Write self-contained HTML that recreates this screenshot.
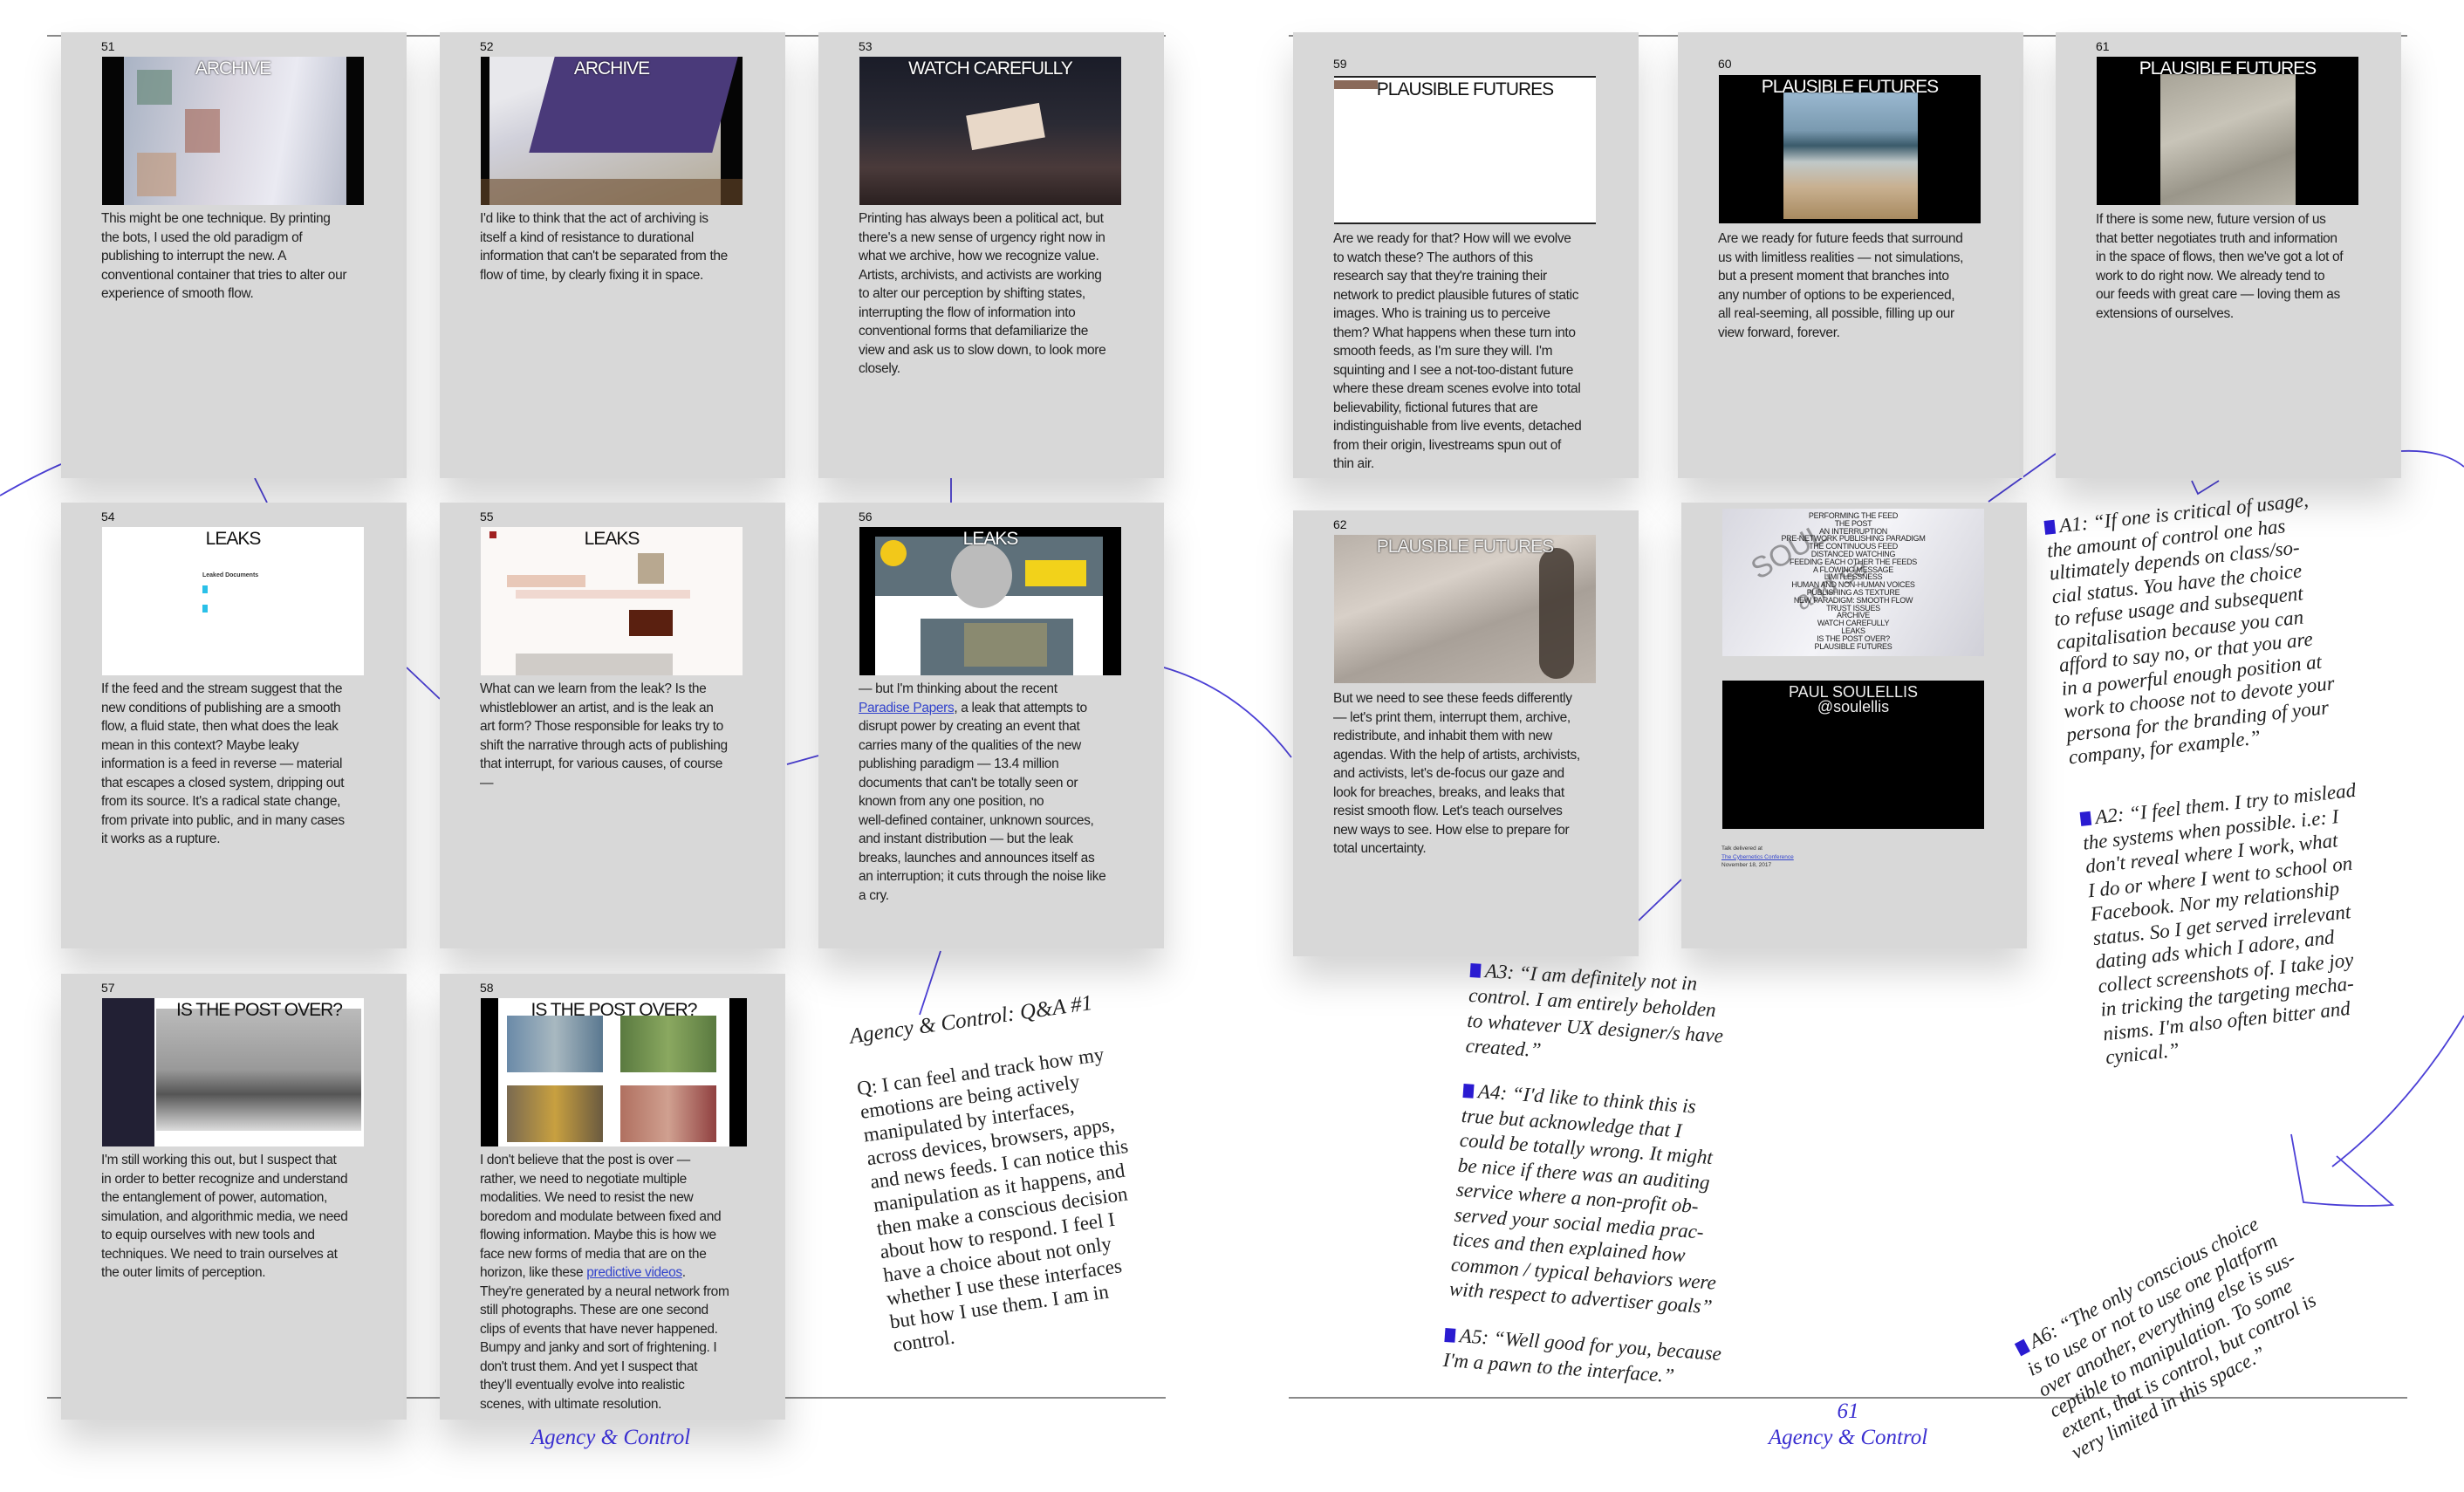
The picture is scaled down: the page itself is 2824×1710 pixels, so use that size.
<!DOCTYPE html>
<html><head><meta charset="utf-8">
<style>
*{margin:0;padding:0;box-sizing:border-box}
body{width:2824px;height:1710px;background:#fff;position:relative;overflow:hidden;font-family:"Liberation Sans",sans-serif}
.hl{position:absolute;height:2px;background:#8a8a8a}
.card{position:absolute;width:396px;height:511px;background:#d8d8d8;box-shadow:0 26px 40px rgba(0,0,0,.17)}
.num{position:absolute;left:46px;top:8px;font-size:14px;color:#111}
.img{position:absolute;left:47px;top:28px;width:300px;height:170px;overflow:hidden;background:#000}
.ttl{position:absolute;left:0;right:0;top:2px;text-align:center;font-size:21px;color:#fff;letter-spacing:-1px;text-shadow:0 0 2px #000}
.ttl.dk{color:#111;text-shadow:none}
.txt{position:absolute;left:46px;top:203px;font-size:15.5px;line-height:21.5px;color:#222;white-space:nowrap;letter-spacing:-.35px}
.txt a{color:#3344cc;text-decoration:underline}
.rot{position:absolute;transform-origin:0 0;font-family:"Liberation Serif",serif;color:#222;white-space:nowrap}
.it{font-style:italic}
.sq{display:inline-block;width:12px;height:16px;background:#2a1bd1;margin-right:5px;vertical-align:-1px}
.foot{position:absolute;font-family:"Liberation Serif",serif;font-style:italic;color:#3a2fd0;font-size:25px;text-align:center;width:300px}
</style></head><body>

<div class="hl" style="left:54px;top:40px;width:1282px"></div>
<div class="hl" style="left:1477px;top:40px;width:1282px"></div>
<div class="hl" style="left:54px;top:1601px;width:1282px;height:1.5px"></div>
<div class="hl" style="left:1477px;top:1601px;width:1282px;height:1.5px"></div>

<svg width="2824" height="1710" style="position:absolute;left:0;top:0" fill="none" stroke="#4b3fd6" stroke-width="1.8">
<path d="M0 568 Q40 545 70 532"/>
<path d="M292 548 L306 576"/>
<path d="M1090 548 L1090 576"/>
<path d="M466 765 L504 801"/>
<path d="M902 876 L938 866"/>
<path d="M1334 765 Q1420 790 1480 868"/>
<path d="M1078 1090 L1054 1163"/>
<path d="M1878 1055 L1927 1008"/>
<path d="M2279 575 L2356 520"/>
<path d="M2512 551 L2519 566 L2543 551"/>
<path d="M2752 517 Q2800 515 2824 535"/>
<path d="M2824 1164 Q2760 1270 2673 1337"/>
<path d="M2626 1300 L2640 1378 Q2700 1384 2742 1381 L2678 1325"/>
</svg>

<!-- 51 -->
<div class="card" style="left:70px;top:37px">
<div class="num">51</div>
<div class="img" style="background:#050505"><div style="position:absolute;left:25px;top:0;width:255px;height:170px;background:linear-gradient(100deg,#a9b3c4,#d9d6e0 45%,#eaeaf2 70%,#b8bccb)"></div>
<div style="position:absolute;left:40px;top:15px;width:40px;height:40px;background:#6a8a7c;opacity:.7"></div><div style="position:absolute;left:95px;top:60px;width:40px;height:50px;background:#a06050;opacity:.6"></div><div style="position:absolute;left:40px;top:110px;width:45px;height:50px;background:#c08a60;opacity:.5"></div>
<div class="ttl">ARCHIVE</div></div>
<div class="txt">This might be one technique. By printing<br>the bots, I used the old paradigm of<br>publishing to interrupt the new. A<br>conventional container that tries to alter our<br>experience of smooth flow.</div>
</div>
<!-- 52 -->
<div class="card" style="left:504px;top:37px">
<div class="num">52</div>
<div class="img" style="background:#050505"><div style="position:absolute;left:10px;top:0;width:265px;height:170px;background:linear-gradient(160deg,#e8e8ec 20%,#d0d0da 40%,#b8b0a0 90%)"></div>
<div style="position:absolute;left:70px;top:0;width:210px;height:110px;background:#4a3a7a;transform:skewX(-15deg)"></div>
<div style="position:absolute;left:0;top:140px;width:300px;height:30px;background:#6a4a2a;opacity:.6"></div>
<div class="ttl">ARCHIVE</div></div>
<div class="txt">I'd like to think that the act of archiving is<br>itself a kind of resistance to durational<br>information that can't be separated from the<br>flow of time, by clearly fixing it in space.</div>
</div>
<!-- 53 -->
<div class="card" style="left:938px;top:37px">
<div class="num">53</div>
<div class="img" style="background:linear-gradient(180deg,#1a1c28 0%,#2a2a34 45%,#4a3a3a 75%,#2a2020)"><div style="position:absolute;left:125px;top:60px;width:85px;height:40px;background:#e8d8c8;transform:rotate(-10deg)"></div>
<div class="ttl">WATCH CAREFULLY</div></div>
<div class="txt">Printing has always been a political act, but<br>there's a new sense of urgency right now in<br>what we archive, how we recognize value.<br>Artists, archivists, and activists are working<br>to alter our perception by shifting states,<br>interrupting the flow of information into<br>conventional forms that defamiliarize the<br>view and ask us to slow down, to look more<br>closely.</div>
</div>
<!-- 54 -->
<div class="card" style="left:70px;top:576px">
<div class="num">54</div>
<div class="img" style="background:#fff"><div class="ttl dk">LEAKS</div>
<div style="position:absolute;left:115px;top:52px;font-size:7px;font-weight:bold;color:#333">Leaked Documents</div>
<div style="position:absolute;left:115px;top:67px;width:6px;height:9px;background:#2ac0e8"></div>
<div style="position:absolute;left:115px;top:89px;width:6px;height:9px;background:#2ac0e8"></div></div>
<div class="txt">If the feed and the stream suggest that the<br>new conditions of publishing are a smooth<br>flow, a fluid state, then what does the leak<br>mean in this context? Maybe leaky<br>information is a feed in reverse — material<br>that escapes a closed system, dripping out<br>from its source. It's a radical state change,<br>from private into public, and in many cases<br>it works as a rupture.</div>
</div>
<!-- 55 -->
<div class="card" style="left:504px;top:576px">
<div class="num">55</div>
<div class="img" style="background:#fbf8f6"><div class="ttl dk">LEAKS</div>
<div style="position:absolute;left:30px;top:55px;width:90px;height:14px;background:#e8c8b8"></div><div style="position:absolute;left:180px;top:30px;width:30px;height:35px;background:#b8a890"></div>
<div style="position:absolute;left:40px;top:72px;width:200px;height:10px;background:#f0d8d0"></div>
<div style="position:absolute;left:170px;top:95px;width:50px;height:30px;background:#5a2010"></div>
<div style="position:absolute;left:40px;top:145px;width:180px;height:25px;background:#d0ccc8"></div>
<div style="position:absolute;left:10px;top:5px;width:8px;height:8px;background:#a02020"></div></div>
<div class="txt">What can we learn from the leak? Is the<br>whistleblower an artist, and is the leak an<br>art form? Those responsible for leaks try to<br>shift the narrative through acts of publishing<br>that interrupt, for various causes, of course<br>—</div>
</div>
<!-- 56 -->
<div class="card" style="left:938px;top:576px">
<div class="num">56</div>
<div class="img" style="background:#000"><div style="position:absolute;left:18px;top:11px;width:261px;height:159px;background:#fff"></div>
<div style="position:absolute;left:18px;top:11px;width:261px;height:68px;background:#5e707a"></div>
<div style="position:absolute;width:30px;height:30px;border-radius:50%;background:#f2c81a;top:15px;left:24px"></div>
<div style="position:absolute;left:105px;top:18px;width:70px;height:75px;border-radius:50%;background:#bbb"></div>
<div style="position:absolute;left:190px;top:38px;width:70px;height:30px;background:#f2d21a"></div>
<div style="position:absolute;left:70px;top:105px;width:175px;height:65px;background:#5e707a"></div>
<div style="position:absolute;left:120px;top:110px;width:95px;height:50px;background:#8a8a70"></div>
<div class="ttl">LEAKS</div></div>
<div class="txt">— but I'm thinking about the recent<br><a>Paradise Papers</a>, a leak that attempts to<br>disrupt power by creating an event that<br>carries many of the qualities of the new<br>publishing paradigm — 13.4 million<br>documents that can't be totally seen or<br>known from any one position, no<br>well-defined container, unknown sources,<br>and instant distribution — but the leak<br>breaks, launches and announces itself as<br>an interruption; it cuts through the noise like<br>a cry.</div>
</div>
<!-- 57 -->
<div class="card" style="left:70px;top:1116px">
<div class="num">57</div>
<div class="img" style="background:#fff"><div style="position:absolute;left:0;top:0;width:60px;height:170px;background:#222034"></div>
<div style="position:absolute;left:62px;top:12px;width:235px;height:140px;background:linear-gradient(180deg,#bbb,#999 50%,#555 70%,#ddd)"></div>
<div class="ttl dk" style="left:60px">IS THE POST OVER?</div></div>
<div class="txt">I'm still working this out, but I suspect that<br>in order to better recognize and understand<br>the entanglement of power, automation,<br>simulation, and algorithmic media, we need<br>to equip ourselves with new tools and<br>techniques. We need to train ourselves at<br>the outer limits of perception.</div>
</div>
<!-- 58 -->
<div class="card" style="left:504px;top:1116px">
<div class="num">58</div>
<div class="img" style="background:#000;width:305px"><div style="position:absolute;left:20px;top:0;width:265px;height:170px;background:#fff"></div>
<div style="position:absolute;left:30px;top:20px;width:110px;height:65px;background:linear-gradient(90deg,#6a8aa8,#a8b8c0,#5a7890)"></div>
<div style="position:absolute;left:160px;top:20px;width:110px;height:65px;background:linear-gradient(90deg,#5a7a40,#8aa860,#5a7a40)"></div>
<div style="position:absolute;left:30px;top:100px;width:110px;height:65px;background:linear-gradient(90deg,#7a6a50,#c8a040,#6a5a40)"></div>
<div style="position:absolute;left:160px;top:100px;width:110px;height:65px;background:linear-gradient(90deg,#b07060,#d0a090,#904040)"></div>
<div class="ttl dk">IS THE POST OVER?</div></div>
<div class="txt">I don't believe that the post is over —<br>rather, we need to negotiate multiple<br>modalities. We need to resist the new<br>boredom and modulate between fixed and<br>flowing information. Maybe this is how we<br>face new forms of media that are on the<br>horizon, like these <a>predictive videos</a>.<br>They're generated by a neural network from<br>still photographs. These are one second<br>clips of events that have never happened.<br>Bumpy and janky and sort of frightening. I<br>don't trust them. And yet I suspect that<br>they'll eventually evolve into realistic<br>scenes, with ultimate resolution.</div>
</div>

<!-- 59 -->
<div class="card" style="left:1482px;top:37px">
<div class="num" style="top:28px">59</div>
<div class="img" style="top:50px;background:#fff;border-top:2px solid #222;border-bottom:2px solid #222"><div class="ttl dk">PLAUSIBLE FUTURES</div>
<div style="position:absolute;left:0;top:3px;width:50px;height:10px;background:#8a6a5a"></div></div>
<div class="txt" style="top:226px">Are we ready for that? How will we evolve<br>to watch these? The authors of this<br>research say that they're training their<br>network to predict plausible futures of static<br>images. Who is training us to perceive<br>them? What happens when these turn into<br>smooth feeds, as I'm sure they will. I'm<br>squinting and I see a not-too-distant future<br>where these dream scenes evolve into total<br>believability, fictional futures that are<br>indistinguishable from live events, detached<br>from their origin, livestreams spun out of<br>thin air.</div>
</div>
<!-- 60 -->
<div class="card" style="left:1923px;top:37px">
<div class="num" style="top:28px">60</div>
<div class="img" style="top:49px;background:#000"><div style="position:absolute;left:74px;top:20px;width:154px;height:145px;background:linear-gradient(180deg,#9ab8d0 0%,#7a9ab0 30%,#3a5a6a 42%,#c0c8c8 55%,#c8b090 75%,#a88a60)"></div>
<div class="ttl">PLAUSIBLE FUTURES</div></div>
<div class="txt" style="top:226px">Are we ready for future feeds that surround<br>us with limitless realities — not simulations,<br>but a present moment that branches into<br>any number of options to be experienced,<br>all real-seeming, all possible, filling up our<br>view forward, forever.</div>
</div>
<!-- 61 -->
<div class="card" style="left:2356px;top:37px">
<div class="num">61</div>
<div class="img" style="background:#000"><div style="position:absolute;left:73px;top:20px;width:155px;height:150px;background:linear-gradient(160deg,#a8a498,#c8c4b8 40%,#9a968a 70%,#b8b4a8)"></div>
<div class="ttl">PLAUSIBLE FUTURES</div></div>
<div class="txt" style="top:204px">If there is some new, future version of us<br>that better negotiates truth and information<br>in the space of flows, then we've got a lot of<br>work to do right now. We already tend to<br>our feeds with great care — loving them as<br>extensions of ourselves.</div>
</div>
<!-- 62 -->
<div class="card" style="left:1482px;top:585px">
<div class="num">62</div>
<div class="img" style="background:linear-gradient(160deg,#b8b0a8,#d8d0c8 35%,#a8a098 60%,#c0b8b0)"><div style="position:absolute;left:235px;top:15px;width:40px;height:150px;background:#3a3028;border-radius:20px;opacity:.8"></div>
<div class="ttl" style="color:#eee">PLAUSIBLE FUTURES</div></div>
<div class="txt" style="top:205px">But we need to see these feeds differently<br>— let's print them, interrupt them, archive,<br>redistribute, and inhabit them with new<br>agendas. With the help of artists, archivists,<br>and activists, let's de-focus our gaze and<br>look for breaches, breaks, and leaks that<br>resist smooth flow. Let's teach ourselves<br>new ways to see. How else to prepare for<br>total uncertainty.</div>
</div>
<!-- 63 -->
<div class="card" style="left:1927px;top:576px">
<div class="img" style="left:47px;top:7px;width:300px;height:169px;background:linear-gradient(120deg,#d8d8e0,#f4f4f8 50%,#d0d0d8)">
<div style="position:absolute;left:30px;top:30px;font-size:34px;color:#333;transform:rotate(-30deg);opacity:.45">SOUL</div>
<div style="position:absolute;left:80px;top:70px;font-size:30px;color:#333;transform:rotate(-30deg);opacity:.45">and se</div>
<div style="position:absolute;left:0;top:4px;width:300px;text-align:center;font-size:9px;line-height:8.8px;color:#222;white-space:nowrap;letter-spacing:-.3px">PERFORMING THE FEED<br>THE POST<br>AN INTERRUPTION<br>PRE-NETWORK PUBLISHING PARADIGM<br>THE CONTINUOUS FEED<br>DISTANCED WATCHING<br>FEEDING EACH OTHER THE FEEDS<br>A FLOWING MESSAGE<br>LIMITLESSNESS<br>HUMAN AND NON-HUMAN VOICES<br>PUBLISHING AS TEXTURE<br>NEW PARADIGM: SMOOTH FLOW<br>TRUST ISSUES<br>ARCHIVE<br>WATCH CAREFULLY<br>LEAKS<br>IS THE POST OVER?<br>PLAUSIBLE FUTURES</div>
</div>
<div style="position:absolute;left:47px;top:204px;width:300px;height:170px;background:#000;color:#eee;text-align:center;font-size:18px;line-height:17px;padding-top:5px">PAUL SOULELLIS<br>@soulellis</div>
<div style="position:absolute;left:46px;top:392px;font-size:6.5px;line-height:9.5px;color:#333">Talk delivered at<br><span style="color:#3344cc;text-decoration:underline">The Cybernetics Conference</span><br>November 18, 2017</div>
</div>

<!-- Q&A -->
<div class="rot" style="left:972px;top:1174px;transform:rotate(-8deg)">
<div class="it" style="font-size:25px;line-height:30px">Agency &amp; Control: Q&amp;A #1</div>
<div style="font-size:23px;line-height:27px;margin-top:31px">Q: I can feel and track how my<br>emotions are being actively<br>manipulated by interfaces,<br>across devices, browsers, apps,<br>and news feeds. I can notice this<br>manipulation as it happens, and<br>then make a conscious decision<br>about how to respond. I feel I<br>have a choice about not only<br>whether I use these interfaces<br>but how I use them. I am in<br>control.</div>
</div>

<div class="rot it" style="left:2342px;top:592px;transform:rotate(-6deg);font-size:23px;line-height:26.5px"><span class="sq"></span>A1: “If one is critical of usage,<br>the amount of control one has<br>ultimately depends on class/so-<br>cial status. You have the choice<br>to refuse usage and subsequent<br>capitalisation because you can<br>afford to say no, or that you are<br>in a powerful enough position at<br>work to choose not to devote your<br>persona for the branding of your<br>company, for example.”</div>

<div class="rot it" style="left:2383px;top:925px;transform:rotate(-6deg);font-size:23px;line-height:27.5px"><span class="sq"></span>A2: “I feel them. I try to mislead<br>the systems when possible. i.e: I<br>don't reveal where I work, what<br>I do or where I went to school on<br>Facebook. Nor my relationship<br>status. So I get served irrelevant<br>dating ads which I adore, and<br>collect screenshots of. I take joy<br>in tricking the targeting mecha-<br>nisms. I'm also often bitter and<br>cynical.”</div>

<div class="rot it" style="left:1686px;top:1097px;transform:rotate(3.5deg);font-size:23px;line-height:29px"><span class="sq"></span>A3: “I am definitely not in<br>control. I am entirely beholden<br>to whatever UX designer/s have<br>created.”</div>

<div class="rot it" style="left:1678px;top:1236px;transform:rotate(4deg);font-size:23px;line-height:28.5px"><span class="sq"></span>A4: “I'd like to think this is<br>true but acknowledge that I<br>could be totally wrong. It might<br>be nice if there was an auditing<br>service where a non-profit ob-<br>served your social media prac-<br>tices and then explained how<br>common / typical behaviors were<br>with respect to advertiser goals”</div>

<div class="rot it" style="left:1657px;top:1515px;transform:rotate(4deg);font-size:23px;line-height:29px"><span class="sq"></span>A5: “Well good for you, because<br>I'm a pawn to the interface.”</div>

<div class="rot it" style="left:2306px;top:1535px;transform:rotate(-28deg);font-size:23px;line-height:27px"><span class="sq"></span>A6: “The only conscious choice<br>is to use or not to use one platform<br>over another, everything else is sus-<br>ceptible to manipulation. To some<br>extent, that is control, but control is<br>very limited in this space.”</div>

<div class="foot" style="left:550px;top:1634px">Agency &amp; Control</div>
<div class="foot" style="left:1968px;top:1604px">61</div>
<div class="foot" style="left:1968px;top:1634px">Agency &amp; Control</div>
</body></html>
